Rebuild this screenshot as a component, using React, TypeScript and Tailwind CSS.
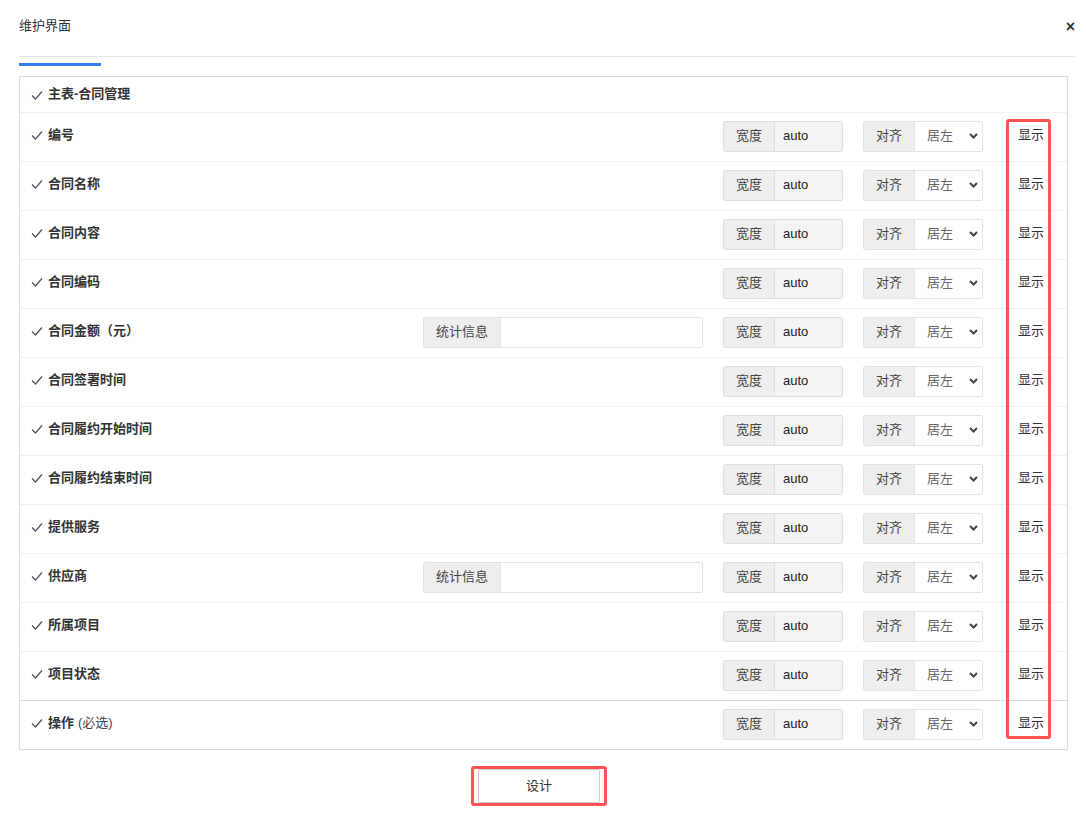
import React from 'react';

type Row = { name: string; stats?: boolean; note?: string };

const rows: Row[] = [
  { name: '编号' },
  { name: '合同名称' },
  { name: '合同内容' },
  { name: '合同编码' },
  { name: '合同金额（元）', stats: true },
  { name: '合同签署时间' },
  { name: '合同履约开始时间' },
  { name: '合同履约结束时间' },
  { name: '提供服务' },
  { name: '供应商', stats: true },
  { name: '所属项目' },
  { name: '项目状态' },
  { name: '操作', note: '(必选)' },
];

const font = { fontFamily: '"Liberation Sans", "Noto Sans CJK SC", sans-serif' };

function Check() {
  return (
    <svg width="12" height="10" viewBox="0 0 12 10" className="shrink-0">
      <polyline points="1,5.5 4.5,9 11,1.5" fill="none" stroke="#4b5563" strokeWidth="1.3" />
    </svg>
  );
}

function Chevron() {
  return (
    <svg width="9" height="6" viewBox="0 0 9 6">
      <polyline points="1,1 4.5,4.5 8,1" fill="none" stroke="#444" strokeWidth="2" />
    </svg>
  );
}

function FieldRow({ row, last }: { row: Row; last: boolean }) {
  return (
    <div
      className={`flex items-center h-[49px] pl-[11px] border-t ${last ? 'border-[#dcdcdc]' : 'border-[#f0f0f0]'}`}
    >
      <div className="flex-1 flex items-center gap-[5px] mb-[4px]">
        <Check />
        <span className="font-semibold text-[#333]">{row.name}</span>
        {row.note && <span className="text-[#444] -ml-[1px]">{' '}{row.note}</span>}
      </div>

      {/* statistics */}
      <div className="w-[280px] mr-[20px] mb-[2px]">
        {row.stats && (
          <div className="flex h-[31px] border border-[#e3e3e3] rounded-[2px]">
            <div className="w-[77px] bg-[#eeeeee] border-r border-[#e3e3e3] flex items-center justify-center text-[#444]">
              统计信息
            </div>
            <div className="flex-1 bg-white" />
          </div>
        )}
      </div>

      {/* width */}
      <div className="flex w-[120px] h-[31px] mb-[2px] border border-[#dedede] rounded-[2px]">
        <div className="w-[51px] bg-[#eeeeee] border-r border-[#dedede] flex items-center justify-center text-[#444]">
          宽度
        </div>
        <div className="flex-1 bg-[#f4f4f4] flex items-center pl-[8px] text-[#222]">auto</div>
      </div>

      {/* align */}
      <div className="flex w-[120px] h-[31px] mb-[2px] ml-[20px] border border-[#e3e3e3] rounded-[2px]">
        <div className="w-[51px] bg-[#eeeeee] border-r border-[#e3e3e3] flex items-center justify-center text-[#444]">
          对齐
        </div>
        <div className="flex-1 bg-white flex items-center justify-between pl-[12px] pr-[4px] text-[#666]">
          <span>居左</span>
          <Chevron />
        </div>
      </div>

      <div className="w-[84px] pl-[35px] mb-[4px] text-[#333]">显示</div>
    </div>
  );
}

export default function App() {
  return (
    <div className="w-[1086px] h-[821px] bg-white text-[13px] px-[19px]" style={font}>
      {/* header */}
      <div className="flex items-center justify-between h-[50px] pt-[1px]">
        <span className="text-[#333]">维护界面</span>
        <span className="text-[#333] text-[16px] font-bold -mr-[8px] mt-[3px]">×</span>
      </div>
      <div className="h-[6px]" />
      <div className="border-t border-[#e5e5e5] -mr-[8px]" />
      <div className="mt-[6px] h-[3px] w-[82px] bg-[#2f7ff0]" />

      {/* table */}
      <div className="relative mt-[10px] border border-[#dcdcdc] w-[1049px]">
        <div className="flex items-center h-[35px] pl-[11px] gap-[5px] mb-[0px]">
          <Check />
          <span className="font-semibold text-[#333] mb-[2px]">主表-合同管理</span>
        </div>
        {rows.map((r, i) => (
          <FieldRow key={r.name} row={r} last={i === rows.length - 1} />
        ))}
        <div className="absolute left-[986px] top-[42px] w-[45px] h-[620px] border-[3px] border-[#ff5252] rounded-[3px] pointer-events-none" />
      </div>

      {/* footer */}
      <div className="flex justify-center mt-[16px] pr-[8px]">
        <div className="border-[3px] border-[#ff5252] rounded-[3px] px-[4px]">
          <button className="w-[122px] h-[34px] border border-[#cfcfcf] rounded-[2px] bg-white text-[#333]">
            设计
          </button>
        </div>
      </div>
    </div>
  );
}
